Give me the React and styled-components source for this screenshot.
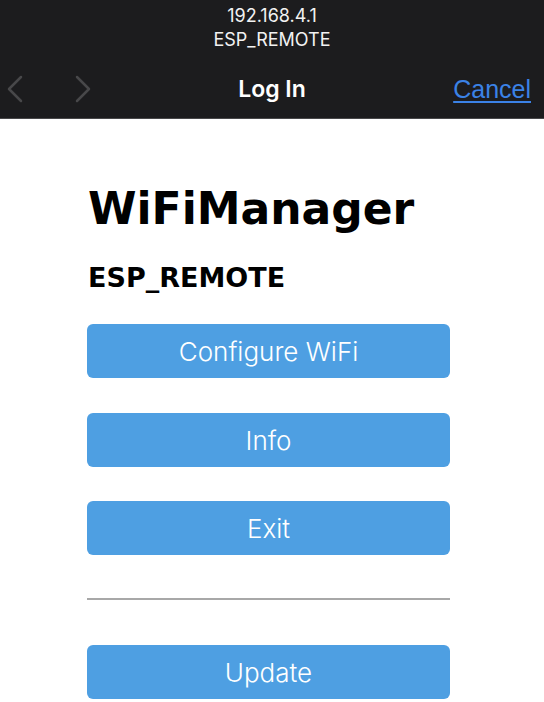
import React from "react";
import styled, { createGlobalStyle } from "styled-components";

const Global = createGlobalStyle`
  html, body { margin: 0; padding: 0; background: #ffffff; }
  body { font-family: "Liberation Sans", Arial, sans-serif; }
`;

const Page = styled.div`
  width: 544px;
  height: 702px;
  overflow: hidden;
  background: #fff;
`;

const TopBar = styled.header`
  height: 118px;
  background: #1c1c1e;
  border-bottom: 1px solid #48484a;
  display: flex;
  flex-direction: column;
`;

const Address = styled.div`
  display: flex;
  flex-direction: column;
  align-items: center;
  padding-top: 4px;
  color: #f2f2f2;
  font-family: Inter, "Liberation Sans", sans-serif;
  font-size: 18px;
  line-height: 24px;
`;

const NavRow = styled.div`
  display: grid;
  grid-template-columns: 1fr auto 1fr;
  align-items: center;
  margin-top: 17px;
  height: 40px;
`;

const Arrows = styled.div`
  display: flex;
  gap: 52px;
  padding-left: 7px;
  align-items: center;
`;

const Title = styled.div`
  color: #ffffff;
  font-family: Inter, "Liberation Sans", sans-serif;
  font-weight: 600;
  font-size: 23px;
`;

const Cancel = styled.a`
  justify-self: end;
  margin-right: 13px;
  color: #3b82e6;
  font-family: "Liberation Sans", Arial, sans-serif;
  font-size: 25px;
  text-decoration: underline;
  text-decoration-thickness: 2px;
  text-underline-offset: 3px;
`;

const Content = styled.main`
  width: 363px;
  margin: 0 auto 0 87px;
  padding-top: 62px;
  display: flex;
  flex-direction: column;
`;

const H1 = styled.h1`
  margin: 0 0 0 1px;
  font-family: "DejaVu Sans", Verdana, sans-serif;
  font-weight: 700;
  font-size: 44px;
  line-height: 56px;
  color: #000;
`;

const H3 = styled.h3`
  margin: 27px 0 0 1px;
  font-family: "DejaVu Sans", Verdana, sans-serif;
  font-weight: 700;
  font-size: 27px;
  line-height: 28px;
  color: #000;
`;

const Button = styled.button`
  display: flex;
  align-items: center;
  justify-content: center;
  width: 100%;
  height: 54px;
  margin-top: ${(p) => p.$gap}px;
  border: none;
  border-radius: 6px;
  background: #4e9fe2;
  color: #ffffff;
  font-family: Inter, "Liberation Sans", sans-serif;
  font-weight: 300;
  font-size: 26px;
  padding: 0;
`;

const Rule = styled.hr`
  margin: 43px 0 0 0;
  border: none;
  border-top: 2px solid #a8a8a8;
  height: 0;
`;

const Chevron = ({ dir }) => (
  <svg width="16" height="28" viewBox="0 0 16 28" fill="none">
    <path
      d={dir === "left" ? "M14 2 L2 14 L14 26" : "M2 2 L14 14 L2 26"}
      stroke="#48484a"
      strokeWidth="2.5"
      strokeLinecap="round"
      strokeLinejoin="round"
    />
  </svg>
);

export default function App() {
  return (
    <Page>
      <Global />
      <TopBar>
        <Address>
          <span>192.168.4.1</span>
          <span>ESP_REMOTE</span>
        </Address>
        <NavRow>
          <Arrows>
            <Chevron dir="left" />
            <Chevron dir="right" />
          </Arrows>
          <Title>Log In</Title>
          <Cancel>Cancel</Cancel>
        </NavRow>
      </TopBar>
      <Content>
        <H1>WiFiManager</H1>
        <H3>ESP_REMOTE</H3>
        <Button $gap={32}>Configure WiFi</Button>
        <Button $gap={35}>Info</Button>
        <Button $gap={34}>Exit</Button>
        <Rule />
        <Button $gap={45}>Update</Button>
      </Content>
    </Page>
  );
}
